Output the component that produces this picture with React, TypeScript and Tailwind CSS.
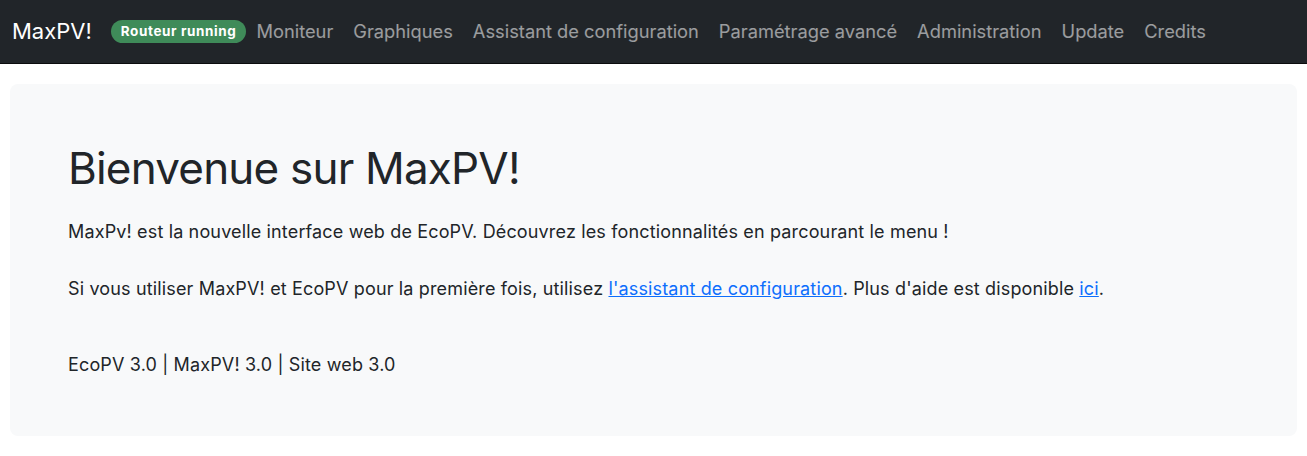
const links = ['Moniteur', 'Graphiques', 'Assistant de configuration', 'Paramétrage avancé', 'Administration', 'Update', 'Credits']

export default function App() {
  return (
    <div className="min-h-screen bg-white text-[#212529] font-['Inter','Liberation_Sans',sans-serif]">
      <nav className="h-16 bg-[#212529] border-b border-[#0b0c0d] flex items-center px-3">
        <span className="text-[22px] text-white mr-[19px]">MaxPV!</span>
        <span className="rounded-full bg-[#3f8b59] text-white text-[13.5px] tracking-[0.6px] font-bold leading-none px-[10px] py-[5px]">
          Routeur running
        </span>
        <ul className="flex items-center">
          {links.map(l => (
            <li key={l}>
              <a className="block px-[10px] text-[18.3px] text-white/55">{l}</a>
            </li>
          ))}
        </ul>
      </nav>

      <main className="px-[10px] pt-5 pb-5">
        <div className="rounded-lg bg-[#f8f9fa] h-[352px] px-[58px] pt-[58px] text-[18px] tracking-[0.15px] leading-[24px]">
          <h1 className="text-[44px] leading-[1.2] tracking-[-0.8px] font-normal mb-[25px]">Bienvenue sur MaxPV!</h1>
          <p>
            MaxPv! est la nouvelle interface web de EcoPV. Découvrez les fonctionnalités en parcourant le menu !
          </p>
          <p className="mt-[33px]">
            Si vous utiliser MaxPV! et EcoPV pour la première fois, utilisez{' '}
            <a className="text-[#0d6efd] underline">l'assistant de configuration</a>. Plus d'aide est disponible{' '}
            <a className="text-[#0d6efd] underline">ici</a>.
          </p>
          <p className="mt-[52px]">EcoPV 3.0 | MaxPV! 3.0 | Site web 3.0</p>
        </div>
      </main>
    </div>
  )
}
